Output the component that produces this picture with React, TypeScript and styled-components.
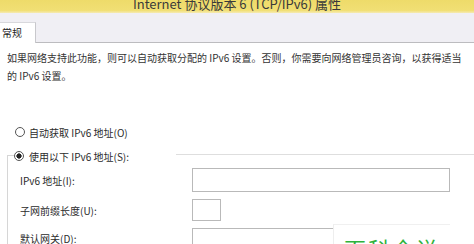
import styled, { createGlobalStyle } from 'styled-components';

const GlobalStyle = createGlobalStyle`
    html, body {
        margin: 0;
        padding: 0;
        background: #ffffff;
        overflow: hidden;
    }
    body {
        font-family: "Noto Sans CJK SC", "Noto Sans", sans-serif;
        color: #2b2b2b;
    }
`;

type InputProps = {
    $width: number;
    $height?: number;
};

type FieldRowProps = {
    $gap: number;
};

export default function App() {
    return (
        <Window>
            <GlobalStyle />
            <TitleBar>
                <Title>Internet 协议版本 6 (TCP/IPv6) 属性</Title>
            </TitleBar>
            <TabStrip>
                <Tab>常规</Tab>
            </TabStrip>
            <Content>
                <Intro>
                    如果网络支持此功能，则可以自动获取分配的 IPv6 设置。否则，你需要向网络管理员咨询，以获得适当的 IPv6 设置。
                </Intro>
                <RadioRow>
                    <Radio />
                    <span>自动获取 IPv6 地址(O)</span>
                </RadioRow>
                <Group>
                    <GroupHeader>
                        <HeadStub />
                        <RadioRow>
                            <Radio $checked />
                            <span>使用以下 IPv6 地址(S):</span>
                        </RadioRow>
                        <HeadLine />
                    </GroupHeader>
                    <GroupBody>
                        <FieldRow $gap={6}>
                            <FieldLabel>IPv6 地址(I):</FieldLabel>
                            <Input $width={258} />
                        </FieldRow>
                        <FieldRow $gap={6}>
                            <FieldLabel>子网前缀长度(U):</FieldLabel>
                            <Input $width={29} $height={22} />
                        </FieldRow>
                        <FieldRow $gap={7}>
                            <FieldLabel>默认网关(D):</FieldLabel>
                            <Input $width={258} $height={20} />
                        </FieldRow>
                    </GroupBody>
                </Group>
            </Content>
            <Watermark>
                <WatermarkText>百科全说</WatermarkText>
            </Watermark>
        </Window>
    );
}

const Window = styled.div`
    position: relative;
    width: 474px;
    height: 244px;
    overflow: hidden;
    background: #ffffff;
    display: flex;
    flex-direction: column;
`;

const TitleBar = styled.div`
    flex-shrink: 0;
    height: 13px;
    background: linear-gradient(#eedb6a, #f1df74 80%, #f5ebb4);
    display: flex;
    justify-content: center;
    align-items: flex-end;
    overflow: hidden;
`;

const Title = styled.div`
    font-family: "Noto Sans CJK SC", "Noto Sans", sans-serif;
    font-size: 13px;
    line-height: 13px;
    color: #3a3a3a;
    margin-bottom: 3px;
    white-space: nowrap;
`;

const TabStrip = styled.div`
    flex-shrink: 0;
    height: 29px;
    background: #f0eff4;
    border-bottom: 1px solid #bcbcbf;
    display: flex;
    align-items: flex-end;
`;

const Tab = styled.div`
    width: 36px;
    height: 21px;
    box-sizing: border-box;
    background: #ffffff;
    border-right: 1px solid #c8c8cc;
    border-top: 1px solid #d8d8dc;
    margin-bottom: -1px;
    padding-left: 2px;
    font-size: 10px;
    line-height: 20px;
    color: #222;
`;

const Content = styled.div`
    flex-shrink: 0;
    padding: 6px 0 0 7px;
    display: flex;
    flex-direction: column;
`;

const Intro = styled.p`
    margin: 0 10px 0 0;
    font-size: 10px;
    line-height: 18px;
    color: #333;
`;

const RadioRow = styled.div`
    display: flex;
    align-items: center;
    gap: 4px;
    height: 20px;
    font-size: 10px;
    color: #2b2b2b;
    white-space: nowrap;
    margin-left: 8px;

    ${Intro} + & {
        margin-top: 37px;
    }
`;

const Radio = styled.span<{ $checked?: boolean }>`
    width: 10px;
    height: 10px;
    box-sizing: border-box;
    border: 1px solid #555;
    border-radius: 50%;
    background: ${p => (p.$checked ? 'radial-gradient(circle, #222 0 2.4px, #fff 2.8px)' : '#fff')};
    flex-shrink: 0;
`;

const Group = styled.div`
    margin-top: 10px;
    display: flex;
    flex-direction: column;
`;

const GroupHeader = styled.div`
    display: flex;
    align-items: center;
    height: 20px;
    margin-top: -6px;

    ${RadioRow} {
        margin-left: 0;
        gap: 5px;
    }
`;

const HeadStub = styled.div`
    width: 7px;
    height: 1px;
    background: #d6d6d6;
    margin-top: -1px;
`;

const HeadLine = styled.div`
    flex: 1;
    height: 1px;
    background: #dedede;
    margin-left: 47px;
    margin-top: -3px;
`;

const GroupBody = styled.div`
    border-left: 1px solid #d6d6d6;
    margin-top: -10px;
    padding: 12px 0 0 12px;
    display: flex;
    flex-direction: column;
`;

const FieldRow = styled.div<FieldRowProps>`
    display: flex;
    align-items: center;
    & + & {
        margin-top: ${p => p.$gap}px;
    }
`;

const FieldLabel = styled.div`
    width: 172px;
    font-size: 10px;
    color: #2b2b2b;
    white-space: nowrap;
`;

const Input = styled.div<InputProps>`
    width: ${p => p.$width}px;
    height: ${p => p.$height ?? 24}px;
    box-sizing: border-box;
    border: 1px solid #b9b9b9;
    background: #fff;
`;

const Watermark = styled.div`
    position: absolute;
    left: 333px;
    top: 224px;
    width: 116px;
    height: 40px;
    background: #ffffff;
    border-top: 1px solid #f0f0f0;
    border-left: 1px solid #eeeeee;
    display: flex;
    justify-content: center;
`;

const WatermarkText = styled.div`
    font-family: "Noto Sans CJK SC", sans-serif;
    font-size: 22px;
    line-height: 22px;
    margin-top: 12px;
    letter-spacing: 2px;
    color: #2fb23b;
`;
